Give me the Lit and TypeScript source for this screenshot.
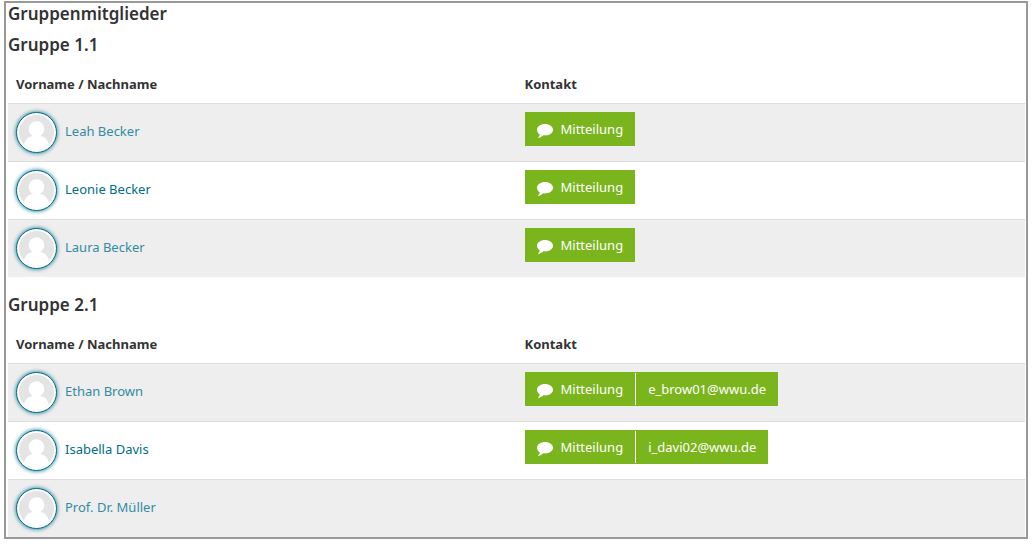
import { LitElement, html, css, nothing } from "lit";
import { customElement, property } from "lit/decorators.js";

interface Member {
  name: string;
  message: boolean;
  mail?: string;
}

interface Group {
  title: string;
  members: Member[];
}

const groups: Group[] = [
  {
    title: "Gruppe 1.1",
    members: [
      { name: "Leah Becker", message: true },
      { name: "Leonie Becker", message: true },
      { name: "Laura Becker", message: true },
    ],
  },
  {
    title: "Gruppe 2.1",
    members: [
      { name: "Ethan Brown", message: true, mail: "e_brow01@wwu.de" },
      { name: "Isabella Davis", message: true, mail: "i_davi02@wwu.de" },
      { name: "Prof. Dr. Müller", message: false },
    ],
  },
];

@customElement("user-avatar")
class UserAvatar extends LitElement {
  static styles = css`
    :host {
      display: block;
      box-sizing: border-box;
      width: 41px;
      height: 41px;
      padding: 2px;
      border: 1px solid #006e89;
      border-radius: 50%;
      background: #fff;
      box-shadow: 0 0 4px #006e89;
    }
    .picture {
      display: block;
      width: 100%;
      height: 100%;
      border-radius: 50%;
      background: #e4e4e4;
    }
  `;

  render() {
    return html`<svg class="picture" viewBox="0 0 35 35" aria-hidden="true">
      <circle cx="17.500" cy="14" r="7.800" fill="#fff" />
      <path
        fill="#fff"
        d="M13.500 19h8v2c4.500.8 7.300 4 8.500 8.500V35H5v-5.500C6.200 25 9 21.800 13.500 21z"
      />
    </svg>`;
  }
}

@customElement("contact-actions")
class ContactActions extends LitElement {
  @property({ attribute: false }) member!: Member;

  static styles = css`
    :host {
      display: flex;
    }
    .action {
      display: flex;
      align-items: center;
      gap: 8px;
      box-sizing: border-box;
      height: 34px;
      padding: 0 12px;
      border: 0;
      background: #7ab51d;
      color: #fff;
      font: inherit;
      text-decoration: none;
      cursor: pointer;
    }
    .bar {
      display: flex;
      align-items: center;
      background: #7ab51d;
    }
    .divider {
      width: 1px;
      height: 32px;
      background: #fff;
    }
    .icon {
      width: 16px;
      height: 14px;
      margin-top: 3px;
    }
  `;

  render() {
    const { message, mail } = this.member;
    if (!message) return nothing;
    return html`<div class="bar">
      <button class="action" type="button">
        <svg class="icon" viewBox="0 0 16 14" aria-hidden="true">
          <path
            fill="#fff"
            d="M8 0c4.500 0 8 2.500 8 5.700s-3.500 5.700-8 5.700c-.6 0-1.200 0-1.700-.1C4.800 12.700 3.200 13.600 1.300 14c-.3 0-.4-.3-.2-.5 1-.9 1.500-1.900 1.600-3.300C1 9.200 0 7.600 0 5.700 0 2.500 3.500 0 8 0z"
          />
        </svg>
        Mitteilung
      </button>
      ${mail
        ? html`<span class="divider"></span><a class="action" href="mailto:${mail}">${mail}</a>`
        : nothing}
    </div>`;
  }
}

@customElement("app-root")
class AppRoot extends LitElement {
  static styles = css`
    :host {
      display: block;
      padding: 1px 5px 15px 4px;
      background: #fff;
      color: #333;
      font: 13px/22px "Noto Sans", "Open Sans", sans-serif;
    }
    .frame {
      padding: 0 1px 0 2px;
      border: 2px solid #999;
    }
    .title,
    .group-title {
      margin: 0;
      font-size: 17px;
      font-weight: 600;
    }
    .title {
      line-height: 22px;
    }
    .group-title {
      line-height: 24px;
      margin: 8px 0;
    }
    .group + .group .group-title {
      margin-top: 16px;
    }
    .members {
      width: 100%;
      table-layout: fixed;
      border-collapse: separate;
      border-spacing: 0;
    }
    .head {
      padding: 8px;
      text-align: left;
      font-weight: 700;
    }
    .cell {
      padding: 8px;
      border-top: 1px solid #ddd;
      vertical-align: top;
    }
    .row:nth-child(odd) .cell {
      background: #eee;
    }
    .person {
      display: flex;
      align-items: flex-start;
      gap: 8px;
      color: #006e89;
      line-height: 38px;
      text-decoration: none;
    }
    .row:nth-child(odd) .person {
      color: #338ba1;
    }
  `;

  render() {
    return html`<main class="frame">
      <h1 class="title">Gruppenmitglieder</h1>
      ${groups.map(
        (group) => html`<section class="group">
          <h2 class="group-title">${group.title}</h2>
          <table class="members">
            <thead>
              <tr>
                <th class="head" scope="col">Vorname / Nachname</th>
                <th class="head" scope="col">Kontakt</th>
              </tr>
            </thead>
            <tbody>
              ${group.members.map(
                (member) => html`<tr class="row">
                  <td class="cell">
                    <a class="person" href="#"><user-avatar></user-avatar>${member.name}</a>
                  </td>
                  <td class="cell"><contact-actions .member=${member}></contact-actions></td>
                </tr>`
              )}
            </tbody>
          </table>
        </section>`
      )}
    </main>`;
  }
}
